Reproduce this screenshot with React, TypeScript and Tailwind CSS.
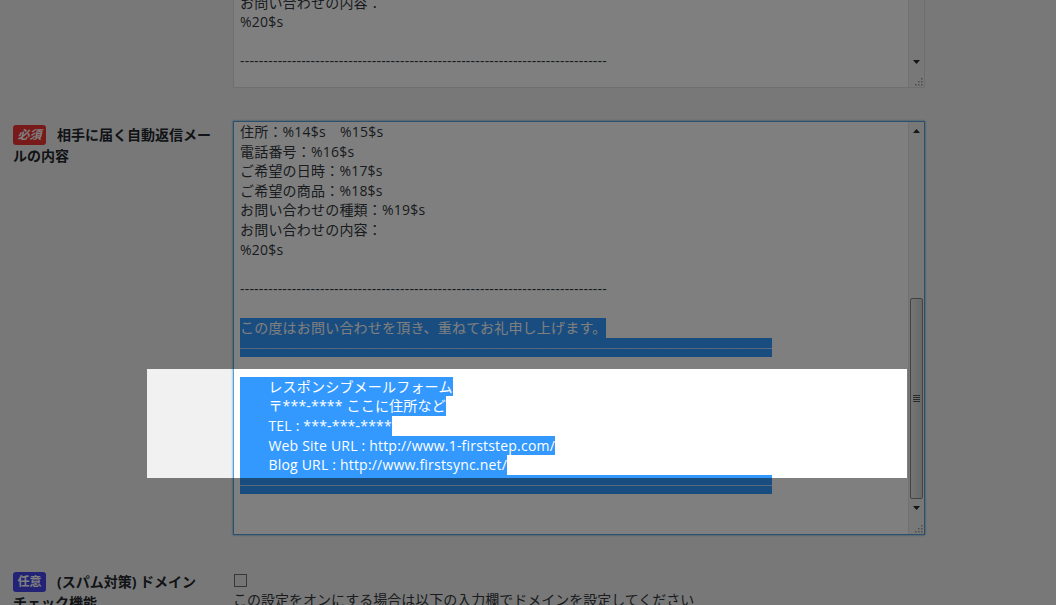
import React from "react";

const SEL = "inline-block h-[19.6px] align-top bg-[#3399ff] text-white";
const DASHES = "-".repeat(78);
const RULE = "─".repeat(38);

function Arrow({ up }: { up?: boolean }) {
  return (
    <svg width="7" height="4" viewBox="0 0 7 4">
      <polygon points={up ? "0,4 7,4 3.5,0" : "0,0 7,0 3.5,4"} fill="#2b2b2b" />
    </svg>
  );
}

function ResizeGrip() {
  const dots = [[8, 8], [5, 8], [2, 8], [8, 5], [5, 5], [8, 2]];
  return (
    <svg width="11" height="11" viewBox="0 0 11 11">
      {dots.map(([x, y], i) => <rect key={i} x={x} y={y} width="1.5" height="1.5" fill="#9a9a9a" />)}
    </svg>
  );
}

function Thumb({ h }: { h: string }) {
  return (
    <div className={`${h} mx-[1px] rounded-[2px] border border-[#858585] bg-gradient-to-r from-[#e9e9e9] to-[#d2d2d2] flex flex-col items-center justify-center gap-[1px]`}>
      {[0, 1, 2, 3].map(i => <div key={i} className="w-[7px] h-[1px] bg-[#555]" />)}
    </div>
  );
}

function Line({ children }: { children?: React.ReactNode }) {
  return <div className="h-[19.6px] whitespace-pre">{children}</div>;
}

function Badge({ kind }: { kind: "req" | "opt" }) {
  return kind === "req" ? (
    <span className="inline-block align-top mt-[0.5px] mr-[11px] w-[33px] h-[20px] leading-[20px] rounded-[3px] bg-[#f03434] text-white text-[12px] font-bold italic text-center">必須</span>
  ) : (
    <span className="inline-block align-top mt-[0.5px] mr-[11px] w-[33px] h-[20px] leading-[20px] rounded-[3px] bg-[#4444ee] text-white text-[12px] font-bold text-center">任意</span>
  );
}

export default function App() {
  return (
    <div className="relative h-[605px] w-[1056px] overflow-hidden bg-[#f1f1f1] text-[14px] leading-[19.6px] text-[#32373c] font-['Open_Sans','Noto_Sans_CJK_JP',sans-serif]">
      <div className="pl-[13px]">
        {/* previous field: notification mail, scrolled to its end */}
        <div className="flex">
          <div className="w-[220px] flex-shrink-0" />
          <div className="-mt-[30px] h-[118px] w-[692px] flex border border-[#dddddd] bg-white">
            <div className="flex-1 flex flex-col justify-end pl-[6px] pb-[16px] overflow-hidden tracking-[0.2px]">
              <Line>お問い合わせの種類：%19$s</Line>
              <Line>お問い合わせの内容：</Line>
              <Line>%20$s</Line>
              <Line />
              <Line>{DASHES}</Line>
            </div>
            <div className="w-[16px] flex flex-col bg-[#f0f0f0] border-l border-[#e4e4e4]">
              <div className="flex-1" />
              <div className="h-[17px] flex items-center justify-center"><Arrow /></div>
              <div className="h-[17px] flex items-end justify-end"><ResizeGrip /></div>
            </div>
          </div>
        </div>

        {/* auto reply mail */}
        <div className="flex mt-[33px]">
          <div className="w-[220px] flex-shrink-0 pr-[20px] pt-[3px] text-[#23282d] font-bold leading-[21px]">
            <Badge kind="req" />相手に届く自動返信メールの内容
          </div>
          <div className="h-[414px] w-[692px] flex border border-[#5b9dd9] shadow-[0_0_2px_rgba(30,140,190,0.8)] bg-white">
            <div className="flex-1 pl-[6px] overflow-hidden tracking-[0.2px]">
              <Line>住所：%14$s　%15$s</Line>
              <Line>電話番号：%16$s</Line>
              <Line>ご希望の日時：%17$s</Line>
              <Line>ご希望の商品：%18$s</Line>
              <Line>お問い合わせの種類：%19$s</Line>
              <Line>お問い合わせの内容：</Line>
              <Line>%20$s</Line>
              <Line />
              <Line>{DASHES}</Line>
              <Line />
              <Line><span className={SEL}>この度はお問い合わせを頂き、重ねてお礼申し上げます。</span></Line>
              <Line><span className={`${SEL} tracking-normal`}>{RULE}</span></Line>
              <Line />
              <Line><span className={SEL}>　　レスポンシブメールフォーム</span></Line>
              <Line><span className={SEL}>　　〒***-**** ここに住所など</span></Line>
              <Line><span className={SEL}>　　TEL : ***-***-****</span></Line>
              <Line><span className={SEL}>　　Web Site URL : http://www.1-firststep.com/</span></Line>
              <Line><span className={SEL}>　　Blog URL : http://www.firstsync.net/</span></Line>
              <Line><span className={`${SEL} tracking-normal`}>{RULE}</span></Line>
            </div>
            <div className="w-[16px] flex flex-col bg-[#f0f0f0] border-l border-[#e4e4e4]">
              <div className="h-[17px] flex items-center justify-center"><Arrow up /></div>
              <div className="h-[159px]" />
              <Thumb h="h-[201px]" />
              <div className="h-[17px] flex items-center justify-center"><Arrow /></div>
              <div className="flex-1 flex items-end justify-end"><ResizeGrip /></div>
            </div>
          </div>
        </div>

        {/* spam domain check */}
        <div className="flex mt-[36px]">
          <div className="w-[220px] flex-shrink-0 pr-[20px] text-[#23282d] font-bold leading-[21px]">
            <Badge kind="opt" />(スパム対策) ドメイン<br />チェック機能
          </div>
          <div className="pt-[3px]">
            <div className="w-[13px] h-[13px] ml-[1px] border border-[#6e6e6e] bg-[#ebebeb]" />
            <div className="mt-[3px] whitespace-nowrap">この設定をオンにする場合は以下の入力欄でドメインを設定してください</div>
          </div>
        </div>
      </div>

      {/* tutorial spotlight */}
      <div className="absolute left-[147px] top-[369px] w-[760px] h-[109px] shadow-[0_0_0_2000px_rgba(0,0,0,0.5)] pointer-events-none" />
    </div>
  );
}
